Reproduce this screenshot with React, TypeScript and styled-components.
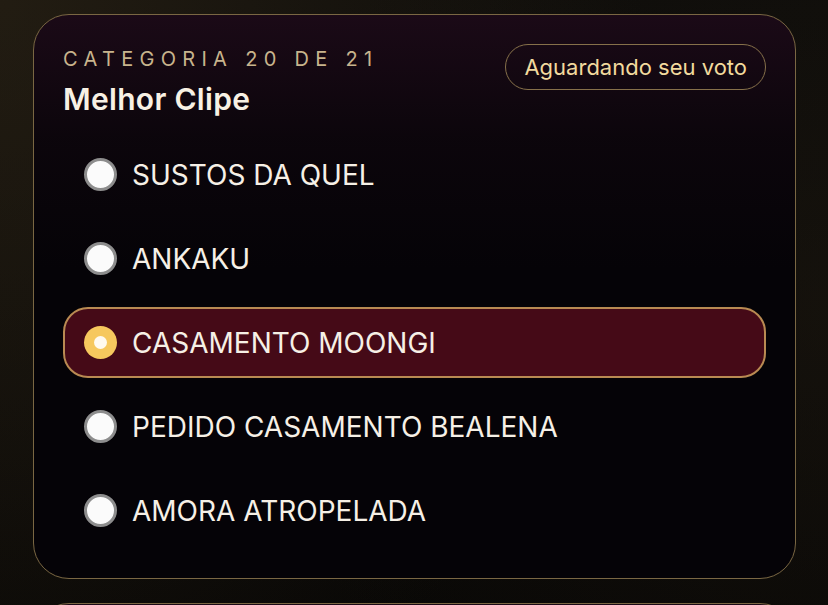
import React, { FC, useState } from 'react';
import styled, { createGlobalStyle } from 'styled-components';

const GlobalStyle = createGlobalStyle`
    html, body {
        margin: 0;
        padding: 0;
        min-height: 100%;
        background: #090806;
    }
    body {
        font-family: Inter, "Liberation Sans", sans-serif;
        -webkit-font-smoothing: antialiased;
    }
`;

const Page = styled.div`
    min-height: 100vh;
    padding: 14px 32px 40px 33px;
    box-sizing: border-box;
    display: flex;
    flex-direction: column;
    gap: 24px;
    background:
        radial-gradient(ellipse at 0% 0%, rgba(60, 48, 28, 0.45), transparent 55%),
        radial-gradient(ellipse at 100% 30%, rgba(40, 32, 20, 0.35), transparent 50%),
        linear-gradient(180deg, #0d0c0a 0%, #050403 100%);
`;

const Card = styled.section`
    width: 763px;
    box-sizing: border-box;
    border: 1.5px solid #7a6743;
    border-radius: 36px;
    padding: 29px 29px 32px 29px;
    background:
        linear-gradient(180deg, rgba(34, 12, 28, 0.75) 0%, rgba(18, 8, 16, 0.5) 22%, rgba(4, 3, 6, 0) 45%),
        #050307;
`;

const Header = styled.header`
    display: flex;
    justify-content: space-between;
    align-items: flex-start;
`;

const Titles = styled.div`
    display: flex;
    flex-direction: column;
    gap: 11px;
    padding-top: 3px;
`;

const Overline = styled.div`
    font-size: 20px;
    line-height: 24px;
    letter-spacing: 6.3px;
    color: #c8b48d;
    text-transform: uppercase;
`;

const Title = styled.h2`
    margin: 0;
    font-size: 30px;
    line-height: 34px;
    font-weight: 600;
    letter-spacing: 0.3px;
    color: #f8f1e4;
`;

const Pill = styled.div`
    height: 46px;
    box-sizing: border-box;
    padding: 0 18px;
    display: flex;
    align-items: center;
    border: 1.5px solid #86704a;
    border-radius: 999px;
    color: #f2da9e;
    font-size: 22px;
    white-space: nowrap;
`;

const Options = styled.ul`
    list-style: none;
    margin: 23px 0 0;
    padding: 0;
    display: flex;
    flex-direction: column;
    gap: 13px;
`;

const Option = styled.li<{ selected: boolean }>`
    height: 71px;
    box-sizing: border-box;
    display: flex;
    align-items: center;
    gap: 15px;
    padding: 0 19px;
    border-radius: 25px;
    border: 2px solid ${({ selected }) => (selected ? '#b98a52' : 'transparent')};
    background: ${({ selected }) => (selected ? '#450a17' : 'transparent')};
    cursor: pointer;
`;

const Radio = styled.span<{ selected: boolean }>`
    width: 33px;
    height: 33px;
    box-sizing: border-box;
    border-radius: 50%;
    flex-shrink: 0;
    display: flex;
    align-items: center;
    justify-content: center;
    background: ${({ selected }) => (selected ? '#f6c85e' : '#fbfbfb')};
    border: ${({ selected }) => (selected ? 'none' : '3px solid #8d8d8d')};
    &::after {
        content: '';
        display: ${({ selected }) => (selected ? 'block' : 'none')};
        width: 13px;
        height: 13px;
        border-radius: 50%;
        background: #fffaf0;
    }
`;

const Label = styled.span`
    font-size: 28px;
    color: #f6f0e6;
    text-transform: uppercase;
    white-space: nowrap;
`;

type Category = {
    index: number;
    total: number;
    name: string;
    nominees: string[];
};

const categories: Category[] = [
    {
        index: 20,
        total: 21,
        name: 'Melhor Clipe',
        nominees: ['Sustos da Quel', 'Ankaku', 'Casamento Moongi', 'Pedido Casamento Bealena', 'Amora Atropelada'],
    },
    {
        index: 21,
        total: 21,
        name: 'Melhor do Ano',
        nominees: ['Sustos da Quel', 'Ankaku', 'Casamento Moongi'],
    },
];

const CategoryCard: FC<{ category: Category; initial: number | null }> = ({ category, initial }) => {
    const [choice, setChoice] = useState<number | null>(initial);
    return (
        <Card>
            <Header>
                <Titles>
                    <Overline>Categoria {category.index} de {category.total}</Overline>
                    <Title>{category.name}</Title>
                </Titles>
                <Pill>Aguardando seu voto</Pill>
            </Header>
            <Options>
                {category.nominees.map((n, i) => (
                    <Option key={n} selected={choice === i} onClick={() => setChoice(i)}>
                        <Radio selected={choice === i} />
                        <Label>{n}</Label>
                    </Option>
                ))}
            </Options>
        </Card>
    );
};

const App: FC = () => (
    <>
        <GlobalStyle />
        <Page>
            <CategoryCard category={categories[0]} initial={2} />
            <CategoryCard category={categories[1]} initial={null} />
        </Page>
    </>
);

export default App;
